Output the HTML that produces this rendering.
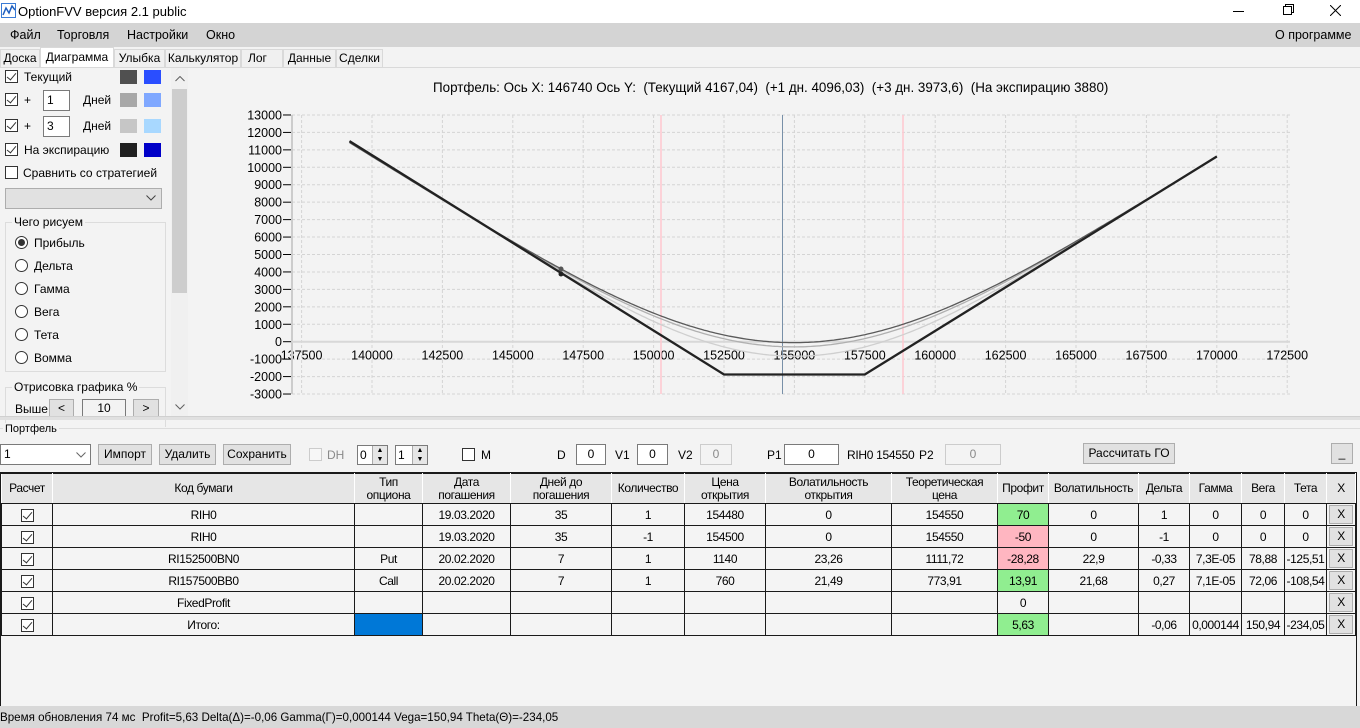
<!DOCTYPE html>
<html><head><meta charset="utf-8">
<style>
*{box-sizing:border-box;margin:0;padding:0}
body{width:1360px;height:728px;overflow:hidden;background:#f3f3f3;font-family:"Liberation Sans",sans-serif;font-size:12px;color:#000;position:relative}
.a{position:absolute;white-space:nowrap}
.cb{position:absolute;width:13px;height:13px;border:1px solid #333;background:#fff}
.cb.on::after{content:"";position:absolute;left:3px;top:0px;width:4px;height:8px;border:solid #333;border-width:0 1px 1px 0;transform:rotate(40deg)}
.sw{position:absolute;width:17px;height:14px}
.inp{position:absolute;border:1px solid #7a7a7a;background:#fff;height:21px;padding:2px 3px;font-size:12px}
.btn{position:absolute;border:1px solid #adadad;background:#e1e1e1;height:21px;text-align:center;line-height:19px;font-size:12px}
.rad{position:absolute;width:13px;height:13px;border:1px solid #333;border-radius:50%;background:#fff}
.rad.on::after{content:"";position:absolute;left:2px;top:2px;width:7px;height:7px;border-radius:50%;background:#333}
.tab{position:absolute;top:49px;height:18px;border:1px solid #d9d9d9;border-bottom:none;background:#f0f0f0;font-size:12px;text-align:center;line-height:17px}
table{position:absolute;left:1px;top:473px;border-collapse:collapse;table-layout:fixed;font-size:12px;letter-spacing:-0.4px}
td,th{border:1px solid #1a1a1a;text-align:center;height:22px;background:#f4f4f4;font-weight:normal;overflow:hidden;white-space:nowrap}
th{background:#e6e6e6;height:30px;border-color:#1a1a1a #fff #1a1a1a #fff;line-height:13px}
td.g{background:#90ee90}td.p{background:#ffb6c1}td.b{background:#0078d7}
.xb{display:block;margin:1px auto;width:24px;height:19px;border:1px solid #adadad;background:#e1e1e1;line-height:17px}
.tcb{display:inline-block;width:13px;height:13px;border:1px solid #333;background:#fff;position:relative;vertical-align:middle}
.tcb::after{content:"";position:absolute;left:3px;top:0;width:4px;height:8px;border:solid #333;border-width:0 1px 1px 0;transform:rotate(40deg)}
</style></head><body>
<div class="a" style="left:0;top:0;width:1360px;height:23px;background:#fff"></div>
<svg class="a" style="left:1px;top:3px" width="16" height="16"><rect x="0.5" y="0.5" width="14" height="14" fill="#fff" stroke="#3a7bd5"/><polyline points="2,12 5,5 8,10 11,3 14,7" fill="none" stroke="#1f5fbf" stroke-width="1.5"/></svg>
<div class="a" style="left:18px;top:4px;font-size:13px">OptionFVV версия 2.1 public</div>
<div class="a" style="left:1233px;top:11px;width:11px;height:1px;background:#000"></div>
<svg class="a" style="left:1283px;top:4px" width="12" height="12"><rect x="0.5" y="2.5" width="8" height="8" fill="none" stroke="#000"/><polyline points="2.5,2.5 2.5,0.5 10.5,0.5 10.5,8.5 8.5,8.5" fill="none" stroke="#000"/></svg>
<svg class="a" style="left:1330px;top:5px" width="11" height="11"><path d="M0,0L11,11M11,0L0,11" stroke="#000"/></svg>
<div class="a" style="left:0;top:23px;width:1360px;height:24px;background:#d4d4d4"></div>
<div class="a" style="left:10px;top:28px;font-size:12.5px">Файл</div>
<div class="a" style="left:57px;top:28px;font-size:12.5px">Торговля</div>
<div class="a" style="left:127px;top:28px;font-size:12.5px">Настройки</div>
<div class="a" style="left:206px;top:28px;font-size:12.5px">Окно</div>
<div class="a" style="left:1275px;top:28px;font-size:12.5px">О программе</div>
<div class="tab" style="left:0;width:40px">Доска</div>
<div class="tab" style="left:40px;width:74px;top:47px;height:21px;background:#fff;border-color:#d9d9d9;line-height:19px">Диаграмма</div>
<div class="tab" style="left:114px;width:51px">Улыбка</div>
<div class="tab" style="left:165px;width:76px">Калькулятор</div>
<div class="tab" style="left:241px;width:42px;text-align:left;padding-left:6px">Лог</div>
<div class="tab" style="left:283px;width:53px">Данные</div>
<div class="tab" style="left:336px;width:47px">Сделки</div>
<div class="a" style="left:0;top:67px;width:1360px;height:1px;background:#d9d9d9"></div>
<div class="cb on" style="left:5px;top:70px"></div><div class="a" style="left:24px;top:70px">Текущий</div>
<div class="sw" style="left:120px;top:70px;background:#505050"></div><div class="sw" style="left:144px;top:70px;background:#2a4eff"></div>
<div class="cb on" style="left:5px;top:93px"></div><div class="a" style="left:24px;top:93px">+</div>
<div class="inp" style="left:43px;top:90px;width:27px">1</div><div class="a" style="left:83px;top:93px">Дней</div>
<div class="sw" style="left:120px;top:93px;background:#a8a8a8"></div><div class="sw" style="left:144px;top:93px;background:#80a8ff"></div>
<div class="cb on" style="left:5px;top:119px"></div><div class="a" style="left:24px;top:119px">+</div>
<div class="inp" style="left:43px;top:116px;width:27px">3</div><div class="a" style="left:83px;top:119px">Дней</div>
<div class="sw" style="left:120px;top:119px;background:#c6c6c6"></div><div class="sw" style="left:144px;top:119px;background:#a8d8ff"></div>
<div class="cb on" style="left:5px;top:143px"></div><div class="a" style="left:24px;top:143px">На экспирацию</div>
<div class="sw" style="left:120px;top:143px;background:#202020"></div><div class="sw" style="left:144px;top:143px;background:#0000c8"></div>
<div class="cb" style="left:5px;top:166px"></div><div class="a" style="left:23px;top:166px">Сравнить со стратегией</div>
<div class="a" style="left:5px;top:188px;width:157px;height:21px;background:#e1e1e1;border:1px solid #adadad"></div>
<svg class="a" style="left:146px;top:195px" width="10" height="6"><polyline points="0.5,0.5 5,5 9.5,0.5" fill="none" stroke="#444"/></svg>
<div class="a" style="left:5px;top:222px;width:161px;height:150px;border:1px solid #dcdcdc"></div>
<div class="a" style="left:12px;top:215px;background:#f3f3f3;padding:0 2px">Чего рисуем</div>
<div class="rad on" style="left:15px;top:236px"></div><div class="a" style="left:34px;top:236px">Прибыль</div>
<div class="rad" style="left:15px;top:259px"></div><div class="a" style="left:34px;top:259px">Дельта</div>
<div class="rad" style="left:15px;top:282px"></div><div class="a" style="left:34px;top:282px">Гамма</div>
<div class="rad" style="left:15px;top:305px"></div><div class="a" style="left:34px;top:305px">Вега</div>
<div class="rad" style="left:15px;top:328px"></div><div class="a" style="left:34px;top:328px">Тета</div>
<div class="rad" style="left:15px;top:351px"></div><div class="a" style="left:34px;top:351px">Вомма</div>
<div class="a" style="left:5px;top:387px;width:161px;height:40px;border:1px solid #dcdcdc;border-bottom:none"></div>
<div class="a" style="left:12px;top:380px;background:#f3f3f3;padding:0 2px">Отрисовка графика %</div>
<div class="a" style="left:15px;top:402px">Выше</div>
<div class="btn" style="left:49px;top:399px;width:25px;height:18px;line-height:16px">&lt;</div>
<div class="a" style="left:82px;top:399px;width:44px;height:18px;border:1px solid #7a7a7a;background:#f3f3f3;text-align:center;line-height:16px">10</div>
<div class="btn" style="left:133px;top:399px;width:26px;height:18px;line-height:16px">&gt;</div>
<div class="a" style="left:171px;top:68px;width:17px;height:348px;background:#f0f0f0"></div>
<div class="a" style="left:172px;top:89px;width:15px;height:204px;background:#cdcdcd"></div>
<svg class="a" style="left:175px;top:76px" width="10" height="6"><polyline points="0.5,5 5,0.5 9.5,5" fill="none" stroke="#606060"/></svg>
<svg class="a" style="left:175px;top:404px" width="10" height="6"><polyline points="0.5,0.5 5,5 9.5,0.5" fill="none" stroke="#606060"/></svg>
<div class="a" style="left:433px;top:80px;font-size:13.4px">Портфель: Ось X: 146740 Ось Y:&nbsp; (Текущий 4167,04)&nbsp; (+1 дн. 4096,03)&nbsp; (+3 дн. 3973,6)&nbsp; (На экспирацию 3880)</div>
<svg id="ch" class="a" style="left:0;top:0" width="1360" height="416" font-family="Liberation Sans, sans-serif" font-size="12.5"></svg>
<div class="a" style="left:0;top:416px;width:1360px;height:4px;background:#e0e0e0;border-top:1px solid #d0d0d0"></div>
<div class="a" style="left:0;top:428px;width:1360px;height:1px;background:#dcdcdc"></div>
<div class="a" style="left:3px;top:423px;background:#f3f3f3;padding:0 2px;font-size:11px">Портфель</div>
<div class="a" style="left:0;top:444px;width:91px;height:21px;background:#fff;border:1px solid #7a7a7a;padding:2px 3px">1</div>
<svg class="a" style="left:76px;top:452px" width="10" height="6"><polyline points="0.5,0.5 5,5 9.5,0.5" fill="none" stroke="#666"/></svg>
<div class="btn" style="left:98px;top:444px;width:54px">Импорт</div>
<div class="btn" style="left:159px;top:444px;width:57px">Удалить</div>
<div class="btn" style="left:223px;top:444px;width:68px">Сохранить</div>
<div class="a" style="left:309px;top:448px;width:13px;height:13px;border:1px solid #ccc;background:#f7f7f7"></div>
<div class="a" style="left:327px;top:448px;color:#8a8a8a">DH</div>
<div class="a" style="left:357px;top:445px;width:31px;height:20px;border:1px solid #7a7a7a;background:#fff;padding:2px 2px">0</div>
<div class="a" style="left:372px;top:446px;width:15px;height:18px;background:#e6e6e6;border-left:1px solid #aaa;font-size:7px;line-height:9px;text-align:center">▲<br>▼</div>
<div class="a" style="left:395px;top:445px;width:33px;height:20px;border:1px solid #7a7a7a;background:#fff;padding:2px 2px">1</div>
<div class="a" style="left:412px;top:446px;width:15px;height:18px;background:#e6e6e6;border-left:1px solid #aaa;font-size:7px;line-height:9px;text-align:center">▲<br>▼</div>
<div class="a" style="left:462px;top:448px;width:13px;height:13px;border:1px solid #333;background:#fff"></div>
<div class="a" style="left:481px;top:448px">M</div>
<div class="a" style="left:557px;top:448px">D</div>
<div class="inp" style="left:576px;top:444px;width:30px;text-align:center">0</div>
<div class="a" style="left:615px;top:448px">V1</div>
<div class="inp" style="left:637px;top:444px;width:31px;text-align:center">0</div>
<div class="a" style="left:678px;top:448px">V2</div>
<div class="inp" style="left:700px;top:444px;width:32px;text-align:center;border-color:#ccc;background:#f3f3f3;color:#8a8a8a">0</div>
<div class="a" style="left:767px;top:448px">P1</div>
<div class="inp" style="left:784px;top:444px;width:55px;text-align:center">0</div>
<div class="a" style="left:847px;top:448px;letter-spacing:-0.3px">RIH0 154550</div>
<div class="a" style="left:919px;top:448px">P2</div>
<div class="inp" style="left:945px;top:444px;width:56px;text-align:center;border-color:#ccc;background:#f3f3f3;color:#8a8a8a">0</div>
<div class="btn" style="left:1083px;top:443px;width:92px">Рассчитать ГО</div>
<div class="btn" style="left:1331px;top:443px;width:22px">_</div>
<div class="a" style="left:0;top:472px;width:1357px;height:234px;border:1px solid #1a1a1a;border-bottom:none;background:#f4f4f4"></div>
<table>
<colgroup><col style="width:51px"><col style="width:302px"><col style="width:68px"><col style="width:88px"><col style="width:101px"><col style="width:73px"><col style="width:81px"><col style="width:126px"><col style="width:106px"><col style="width:51px"><col style="width:90px"><col style="width:51px"><col style="width:52px"><col style="width:43px"><col style="width:42px"><col style="width:29px"></colgroup>
<tr><th>Расчет</th><th>Код бумаги</th><th>Тип<br>опциона</th><th>Дата<br>погашения</th><th>Дней до<br>погашения</th><th>Количество</th><th>Цена<br>открытия</th><th>Волатильность<br>открытия</th><th>Теоретическая<br>цена</th><th>Профит</th><th>Волатильность</th><th>Дельта</th><th>Гамма</th><th>Вега</th><th>Тета</th><th>X</th></tr>
<tr><td><span class="tcb"></span></td><td>RIH0</td><td></td><td>19.03.2020</td><td>35</td><td>1</td><td>154480</td><td>0</td><td>154550</td><td class="g">70</td><td>0</td><td>1</td><td>0</td><td>0</td><td>0</td><td><span class="xb">X</span></td></tr>
<tr><td><span class="tcb"></span></td><td>RIH0</td><td></td><td>19.03.2020</td><td>35</td><td>-1</td><td>154500</td><td>0</td><td>154550</td><td class="p">-50</td><td>0</td><td>-1</td><td>0</td><td>0</td><td>0</td><td><span class="xb">X</span></td></tr>
<tr><td><span class="tcb"></span></td><td>RI152500BN0</td><td>Put</td><td>20.02.2020</td><td>7</td><td>1</td><td>1140</td><td>23,26</td><td>1111,72</td><td class="p">-28,28</td><td>22,9</td><td>-0,33</td><td>7,3E-05</td><td>78,88</td><td>-125,51</td><td><span class="xb">X</span></td></tr>
<tr><td><span class="tcb"></span></td><td>RI157500BB0</td><td>Call</td><td>20.02.2020</td><td>7</td><td>1</td><td>760</td><td>21,49</td><td>773,91</td><td class="g">13,91</td><td>21,68</td><td>0,27</td><td>7,1E-05</td><td>72,06</td><td>-108,54</td><td><span class="xb">X</span></td></tr>
<tr><td><span class="tcb"></span></td><td>FixedProfit</td><td></td><td></td><td></td><td></td><td></td><td></td><td></td><td>0</td><td></td><td></td><td></td><td></td><td></td><td><span class="xb">X</span></td></tr>
<tr><td><span class="tcb"></span></td><td>Итого:</td><td class="b"></td><td></td><td></td><td></td><td></td><td></td><td></td><td class="g">5,63</td><td></td><td>-0,06</td><td>0,000144</td><td>150,94</td><td>-234,05</td><td><span class="xb">X</span></td></tr>
</table>
<div class="a" style="left:0;top:706px;width:1360px;height:22px;background:#d8d8d8"></div>
<div class="a" style="left:0;top:711px;font-size:11.6px">Время обновления 74 мс&nbsp; Profit=5,63 Delta(Δ)=-0,06 Gamma(Γ)=0,000144 Vega=150,94 Theta(Θ)=-234,05</div>
<script>
(function(){
var s=document.getElementById('ch'),h='';
var X=function(v){return 301.6+(v-137500)/2500*70.4};
var Y=function(v){return 341.7-v/1000*17.44};
var L=292,R=1290,T=115,B=394;
for(var k=-3;k<=13;k++){var y=Y(k*1000);h+='<line x1="'+L+'" x2="'+R+'" y1="'+y+'" y2="'+y+'" stroke="#d4d4d4" stroke-dasharray="3,2"/>';
h+='<line x1="283" x2="291" y1="'+y+'" y2="'+y+'" stroke="#000"/>';
h+='<text x="282" y="'+(y+4.5)+'" text-anchor="end">'+(k*1000)+'</text>';}
for(var v=137500;v<=172500;v+=2500){var x=X(v);h+='<line y1="'+T+'" y2="'+B+'" x1="'+x+'" x2="'+x+'" stroke="#d4d4d4" stroke-dasharray="3,2"/>';
h+='<text x="'+x+'" y="'+(Y(0)+18)+'" text-anchor="middle">'+v+'</text>';}
h+='<line x1="'+L+'" x2="'+L+'" y1="'+T+'" y2="'+B+'" stroke="#ccc" stroke-width="2"/>';
h+='<line x1="'+L+'" x2="'+R+'" y1="'+Y(0)+'" y2="'+Y(0)+'" stroke="#d8d8d8" stroke-width="2"/>';
h+='<line x1="661" x2="661" y1="'+T+'" y2="'+B+'" stroke="#ffc8d0" stroke-width="1.5"/>';
h+='<line x1="903" x2="903" y1="'+T+'" y2="'+B+'" stroke="#ffc8d0" stroke-width="1.5"/>';
h+='<line x1="782.5" x2="782.5" y1="'+T+'" y2="'+B+'" stroke="#7890a8"/>';
function N(x){var t=1/(1+0.2316419*Math.abs(x)),d=0.3989423*Math.exp(-x*x/2),p=d*t*(0.3193815+t*(-0.3565638+t*(1.781478+t*(-1.821256+t*1.330274))));return x>0?1-p:p;}
function bs(S,K,sig,T,c){if(T<=0)return c?Math.max(S-K,0):Math.max(K-S,0);var st=sig*Math.sqrt(T),d1=(Math.log(S/K)+st*st/2)/st,d2=d1-st;return c?S*N(d1)-K*N(d2):K*N(-d2)-S*N(-d1);}
function V(S,T){return bs(S,152500,0.229,T,0)+bs(S,157500,0.2168,T,1)-1900+20;}
function path(T,col,w){var p='';for(var S=139200;S<=170000;S+=100){p+=(p?'L':'M')+X(S).toFixed(1)+','+Y(V(S,T)).toFixed(1);}return '<path d="'+p+'" fill="none" stroke="'+col+'" stroke-width="'+w+'"/>';}
h+=path(4/365,'#cfcfcf',1.3);h+=path(6/365,'#b0b0b0',1.3);h+=path(7/365,'#5a5a5a',1.3);
h+='<polyline points="'+X(139200)+','+Y(11500)+' '+X(152500)+','+Y(-1880)+' '+X(157500)+','+Y(-1880)+' '+X(170000)+','+Y(10620)+'" fill="none" stroke="#222" stroke-width="2.3"/>';
h+='<circle cx="561" cy="'+Y(4167)+'" r="2.5" fill="#555"/><circle cx="561" cy="'+Y(3880)+'" r="2.5" fill="#222"/>';
s.innerHTML=h;})();
</script>
</body></html>
